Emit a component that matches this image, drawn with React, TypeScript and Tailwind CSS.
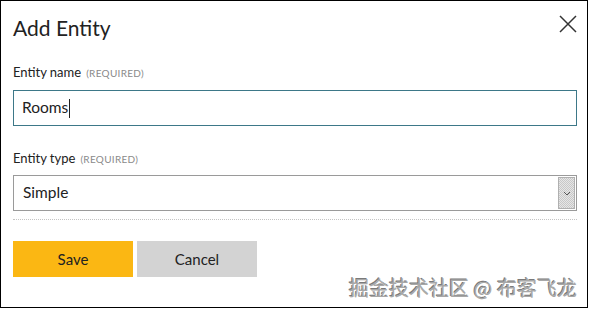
import React from 'react';

const font = { fontFamily: '"Lato", "Noto Sans", sans-serif' };

const Label = ({ name }: { name: string }) => (
  <div className="flex items-baseline gap-[5px] text-[13px] leading-none text-[#222]">
    <span>{name}</span>
    <span className="text-[10px] tracking-[0.3px] text-[#8a8a8a]">(REQUIRED)</span>
  </div>
);

const App = () => {
  return (
    <div className="h-[309px] w-[589px] overflow-hidden bg-white" style={font}>
      <div className="relative flex h-[308px] w-[588px] flex-col border border-black pl-[12px] pr-[10px]">
        <div className="flex items-start justify-between pt-[13px]">
          <h1 className="text-[21px] leading-[28px] text-[#222]">Add Entity</h1>
          <button className="mt-[1px] text-[#333]">
            <svg width="18" height="18" viewBox="0 0 18 18" fill="none">
              <path d="M1 1 L17 17 M17 1 L1 17" stroke="#333" strokeWidth="1.5" />
            </svg>
          </button>
        </div>

        <div className="mt-[24px]">
          <Label name="Entity name" />
        </div>
        <div className="mt-[11px] flex h-[36px] items-center border border-[#3d7888] px-[8px] text-[15.5px] text-[#222]">
          <span>Rooms</span>
          <span className="ml-[1px] h-[19px] w-[1px] bg-[#222]"></span>
        </div>

        <div className="mt-[26px]">
          <Label name="Entity type" />
        </div>
        <div className="mt-[10px] flex h-[36px] items-center border border-[#9a9a9a] pl-[9px] text-[15.5px] text-[#222]">
          <span className="flex-1">Simple</span>
          <div className="mr-[1px] flex h-[32px] w-[17px] items-center justify-center border border-[#b0b0b0] bg-[repeating-conic-gradient(#c8c8c8_0%_25%,#e6e6e6_0%_50%)] bg-[length:2px_2px]">
            <svg width="8" height="5" viewBox="0 0 8 5" fill="none">
              <path d="M1 1 L4 4 L7 1" stroke="#555" strokeWidth="1" />
            </svg>
          </div>
        </div>

        <div className="mt-[8px] border-t border-dotted border-[#c4c4c4]"></div>

        <div className="mt-[21px] flex gap-[4px]">
          <button className="h-[36px] w-[120px] bg-[#fbb713] text-[15px] text-[#222]">Save</button>
          <button className="h-[36px] w-[120px] bg-[#d3d3d3] text-[15px] text-[#222]">Cancel</button>
        </div>

        <div
          className="absolute bottom-[9px] right-[10px] text-[20px] leading-none text-[#a8a8a8] [text-shadow:1px_1px_0_#ffffff,-1px_-1px_0_#7a7a7a]"
          style={{ fontFamily: '"Noto Sans CJK SC", "Noto Sans", sans-serif' }}
        >
          掘金技术社区 @ 布客飞龙
        </div>
      </div>
    </div>
  );
};

export default App;
